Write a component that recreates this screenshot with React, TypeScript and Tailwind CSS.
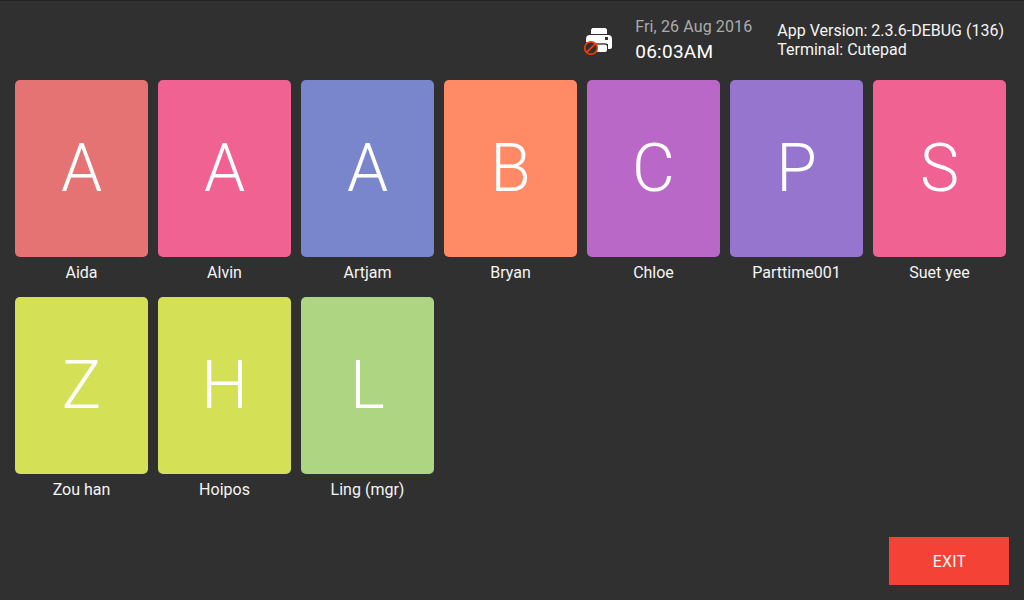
const people = [
  { name: 'Aida', color: 'bg-[#e57373]' },
  { name: 'Alvin', color: 'bg-[#f06292]' },
  { name: 'Artjam', color: 'bg-[#7986cb]' },
  { name: 'Bryan', color: 'bg-[#ff8a65]' },
  { name: 'Chloe', color: 'bg-[#ba68c8]' },
  { name: 'Parttime001', color: 'bg-[#9575cd]' },
  { name: 'Suet yee', color: 'bg-[#f06292]' },
  { name: 'Zou han', color: 'bg-[#d4e157]' },
  { name: 'Hoipos', color: 'bg-[#d4e157]' },
  { name: 'Ling (mgr)', color: 'bg-[#aed581]' },
];

function PrinterOff() {
  return (
    <svg className="mt-[24px] h-[32px] w-[32px]" viewBox="0 0 32 32">
      <path fill="#fff" d="M10.500 3h13l1.500 1.500V9H9V4.500zM8 10h18q4 0 4 4v8q0 2-2 2h-2v-5H9l-5-2v-3q0-4 4-4z" />
      <path fill="#303030" d="M23 12h3v3h-3z" />
      <path fill="#fff" d="M10 19.500h13q2 0 2 2V25q0 2-2 2H10z" />
      <path fill="none" stroke="#303030" strokeWidth="1" d="M12 18.800h11.500q2 0 2 2V24" />
      <circle cx="9" cy="23" r="6.300" fill="#303030" stroke="#ff3d00" strokeWidth="1.600" />
      <path d="M4.600 27.400l8.800-8.800" stroke="#ff3d00" strokeWidth="1.600" />
    </svg>
  );
}

export default function App() {
  return (
    <div className="flex h-[600px] w-[1024px] flex-col overflow-hidden border-t border-[#222] bg-[#303030] font-['Roboto',sans-serif] text-[#f5f5f5]">
      <header className="flex h-[79px] justify-end pr-5">
        <PrinterOff />
        <div className="ml-[21px] w-[142px] pt-[15px]">
          <div className="text-base leading-[21px] tracking-[0.12px] text-[#acacac]">Fri, 26 Aug 2016</div>
          <div className="mt-0.5 text-[19px] leading-[25px] tracking-[0.25px] text-white">06:03AM</div>
        </div>
        <div className="whitespace-nowrap pt-5 text-base leading-[19px]">
          <div>App Version: 2.3.6-DEBUG (136)</div>
          <div>Terminal: Cutepad</div>
        </div>
      </header>
      <main className="grid grid-cols-[repeat(7,133px)] gap-x-2.5 pl-[15px]">
        {people.map((p) => (
          <div key={p.name} className="h-[217px] text-center">
            <div className={`flex h-[177px] items-center justify-center rounded-[5px] text-[66px] font-light text-white ${p.color}`}>
              {p.name[0]}
            </div>
            <div className="pt-[5px] text-base leading-[21px]">{p.name}</div>
          </div>
        ))}
      </main>
      <button className="mt-auto mr-[15px] mb-[15px] h-12 w-[120px] self-end bg-[#f44336] pt-0.5 pl-px text-base tracking-[0.2px]">EXIT</button>
    </div>
  );
}
